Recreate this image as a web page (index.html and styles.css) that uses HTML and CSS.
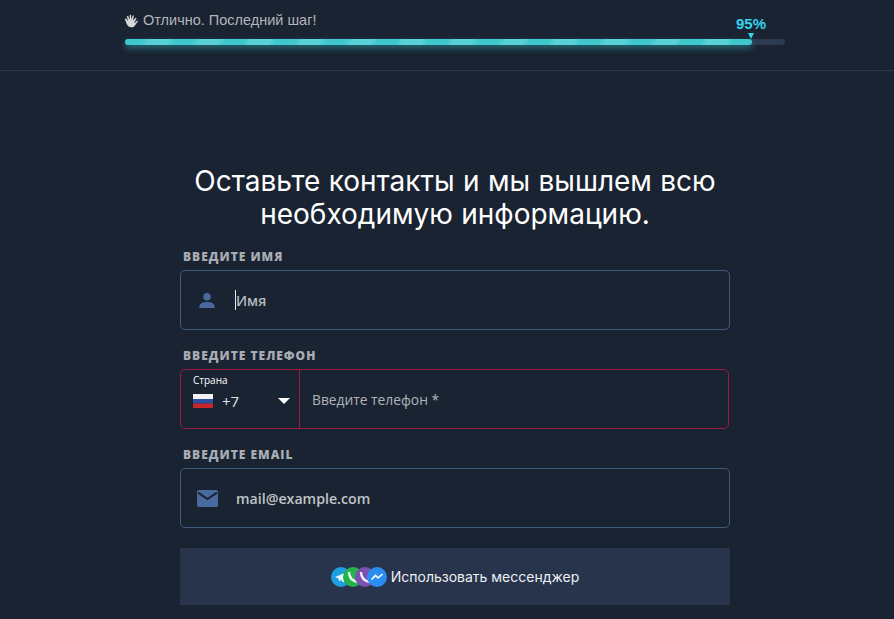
FILE: index.html
```html
<!DOCTYPE html>
<html lang="ru">
<head>
<meta charset="utf-8">
<title>Последний шаг</title>
<link rel="stylesheet" href="styles.css">
</head>
<body>
<header class="top">
  <div class="top-inner">
    <div class="step"><svg class="hand" viewBox="0 0 16 16" width="15" height="15"><path fill="#d8d8d8" d="M.8 6.500l1.200-.8 2.400 2.800L3 3.500l1.300-.5 1.900 4.300L6 2l1.400-.2.700 5.200L9.300 2.500l1.300.3-1 5.200 2.700-3 1.100.7-2.700 5.300 1-.5 2.300-2.500.9.8-3.400 4.700c-1.300 1.700-4.500 2.300-6.500 1C3 13 2.500 10.500.8 6.500z"/></svg><span>Отлично. Последний шаг!</span></div>
    <div class="track">
      <div class="fill"></div>
      <div class="pct">95%</div>
    </div>
  </div>
</header>
<main class="form">
  <h1 class="title">Оставьте контакты и мы вышлем всю необходимую информацию.</h1>
  <div class="label">Введите имя</div>
  <div class="field">
    <svg class="ico-user" viewBox="0 0 18 18" width="18" height="18"><circle cx="9" cy="5" r="4" fill="#4a6a9f"/><path fill="#4a6a9f" d="M1 17v-2c0-3 4-4.500 8-4.500s8 1.500 8 4.500v2z"/></svg>
    <span class="caret"></span><span class="ph">Имя</span>
  </div>
  <div class="label">Введите телефон</div>
  <div class="phone">
    <div class="country">
      <div class="country-label">Страна</div>
      <div class="country-row">
        <svg class="flag" viewBox="0 0 20 14" width="20" height="14"><rect width="20" height="5" fill="#f2f2f2"/><rect y="5" width="20" height="4.500" fill="#2b4fa0"/><rect y="9.500" width="20" height="4.500" fill="#c8262c"/></svg>
        <span class="code">+7</span>
        <span class="arrow"></span>
      </div>
    </div>
    <div class="phone-ph">Введите телефон *</div>
  </div>
  <div class="label">Введите email</div>
  <div class="field">
    <svg class="ico-mail" viewBox="0 0 20 16" width="20" height="16"><rect width="20" height="16" rx="1.500" fill="#4a6a9f"/><path d="M1 2.500l9 6 9-6" fill="none" stroke="#1a2332" stroke-width="2"/></svg>
    <span class="mail">mail@example.com</span>
  </div>
  <button class="messenger" type="button">
    <span class="bubbles">
      <svg class="bubble" viewBox="0 0 20 20" width="20" height="20"><circle cx="10" cy="10" r="10" fill="#1f9fe0"/><path fill="#e8f6ff" d="M4 10l11-4.500-2 10-3.500-2.500-1.500 1.500-.5-3z"/></svg>
      <svg class="bubble" viewBox="0 0 20 20" width="20" height="20"><circle cx="10" cy="10" r="10" fill="#22b34a"/><path fill="none" stroke="#eafff0" stroke-width="2.400" d="M6 5c0 5 3 9 9 10"/></svg>
      <svg class="bubble" viewBox="0 0 20 20" width="20" height="20"><circle cx="10" cy="10" r="10" fill="#7d4fb0"/><path fill="none" stroke="#f3ebff" stroke-width="2.400" d="M6 5c0 5 3 9 9 10"/></svg>
      <svg class="bubble" viewBox="0 0 20 20" width="20" height="20"><circle cx="10" cy="10" r="10" fill="#2a8df0"/><path fill="none" stroke="#ffffff" stroke-width="1.600" d="M4.500 12.500l4-4 2.500 2.500 4.500-4"/></svg>
    </span>
    <span>Использовать мессенджер</span>
  </button>
</main>
</body>
</html>
```
FILE: styles.css
```css
* { box-sizing: border-box; }
html, body { margin: 0; height: 100%; overflow: hidden; }
body { background: #1a2332; font-family: "Inter", "Liberation Sans", sans-serif; color: #fff; }
.top { height: 71px; border-bottom: 1px solid #2a3b4d; }
.top-inner { width: 660px; margin: 0 0 0 125px; padding-top: 12px; }
.step { display: flex; align-items: center; gap: 4px; height: 16px; margin-left: -1px; font-family: "Liberation Sans", sans-serif; font-size: 14.5px; line-height: 16px; color: #b4b6ba; }
.hand { flex: none; }
.track { position: relative; height: 6px; margin-top: 11px; background: #2c3a52; border-radius: 3px; }
.fill { width: 95%; height: 6px; border-radius: 3px; background: repeating-linear-gradient(120deg, #3ec7cd 0 16px, #58d2d7 22px 38px, #3ec7cd 44px); box-shadow: 0 3px 6px rgba(51, 195, 202, .5); }
.pct { position: absolute; left: 611px; top: -24px; font-size: 15px; line-height: 17px; font-weight: 700; font-family: "Liberation Sans", sans-serif; color: #35d4ee; }
.pct::after { content: ""; position: absolute; left: 12px; top: 18px; border: 3px solid transparent; border-top: 6px solid #35d4ee; border-bottom: 0; }
.form { width: 550px; margin: 0 0 0 180px; padding-top: 94px; }
.title { margin: 0; font-size: 28px; line-height: 33px; font-weight: 400; text-align: center; color: #fff; word-spacing: .5px; }
.label { margin: 19px 0 6px 3px; height: 14px; font-family: "Open Sans", sans-serif; font-size: 12px; line-height: 14px; font-weight: 800; letter-spacing: 1px; text-transform: uppercase; color: #a9adb3; }
.field { display: flex; align-items: center; height: 60px; padding-left: 17px; border: 1px solid #3d5a80; border-radius: 5px; }
.ico-user { margin-right: 19px; width: 18px; height: 17px; flex: none; }
.ico-mail { margin-right: 18px; margin-left: -1px; width: 21px; height: 17px; flex: none; }
.caret { width: 1px; height: 20px; background: #e0e6ee; }
.ph { padding-top: 1px; font-size: 14px; color: #b6babf; font-family: "Open Sans", sans-serif; font-weight: 600; }
.mail { font-size: 14.2px; color: #c0c4c8; font-family: "Open Sans", sans-serif; font-weight: 600; }
.phone { display: flex; width: 549px; height: 60px; border: 1px solid #9e1b3f; border-radius: 5px; }
.country { width: 119px; padding: 4px 0 0 12px; border-right: 1px solid #9e1b3f; }
.country-label { font-size: 10px; line-height: 13px; font-family: "Open Sans", sans-serif; color: #fff; }
.country-row { display: flex; align-items: center; height: 22px; margin-top: 3px; }
.code { margin-left: 9px; font-size: 15px; font-family: "Open Sans", sans-serif; color: #e4e6e9; }
.arrow { margin-left: 39px; border: 6px solid transparent; border-top: 6px solid #fff; border-bottom: 0; }
.phone-ph { padding: 21px 0 0 12px; font-size: 13.8px; line-height: 18px; font-family: "Open Sans", sans-serif; color: #b0b4b9; }
.messenger { display: flex; align-items: center; justify-content: center; gap: 4px; width: 550px; height: 57px; margin-top: 20px; padding: 0; border: 0; background: #27344b; color: #eef0f3; font-family: "Inter", sans-serif; font-size: 14px; }
.bubbles { display: flex; }
.bubble + .bubble { margin-left: -8px; }
```
